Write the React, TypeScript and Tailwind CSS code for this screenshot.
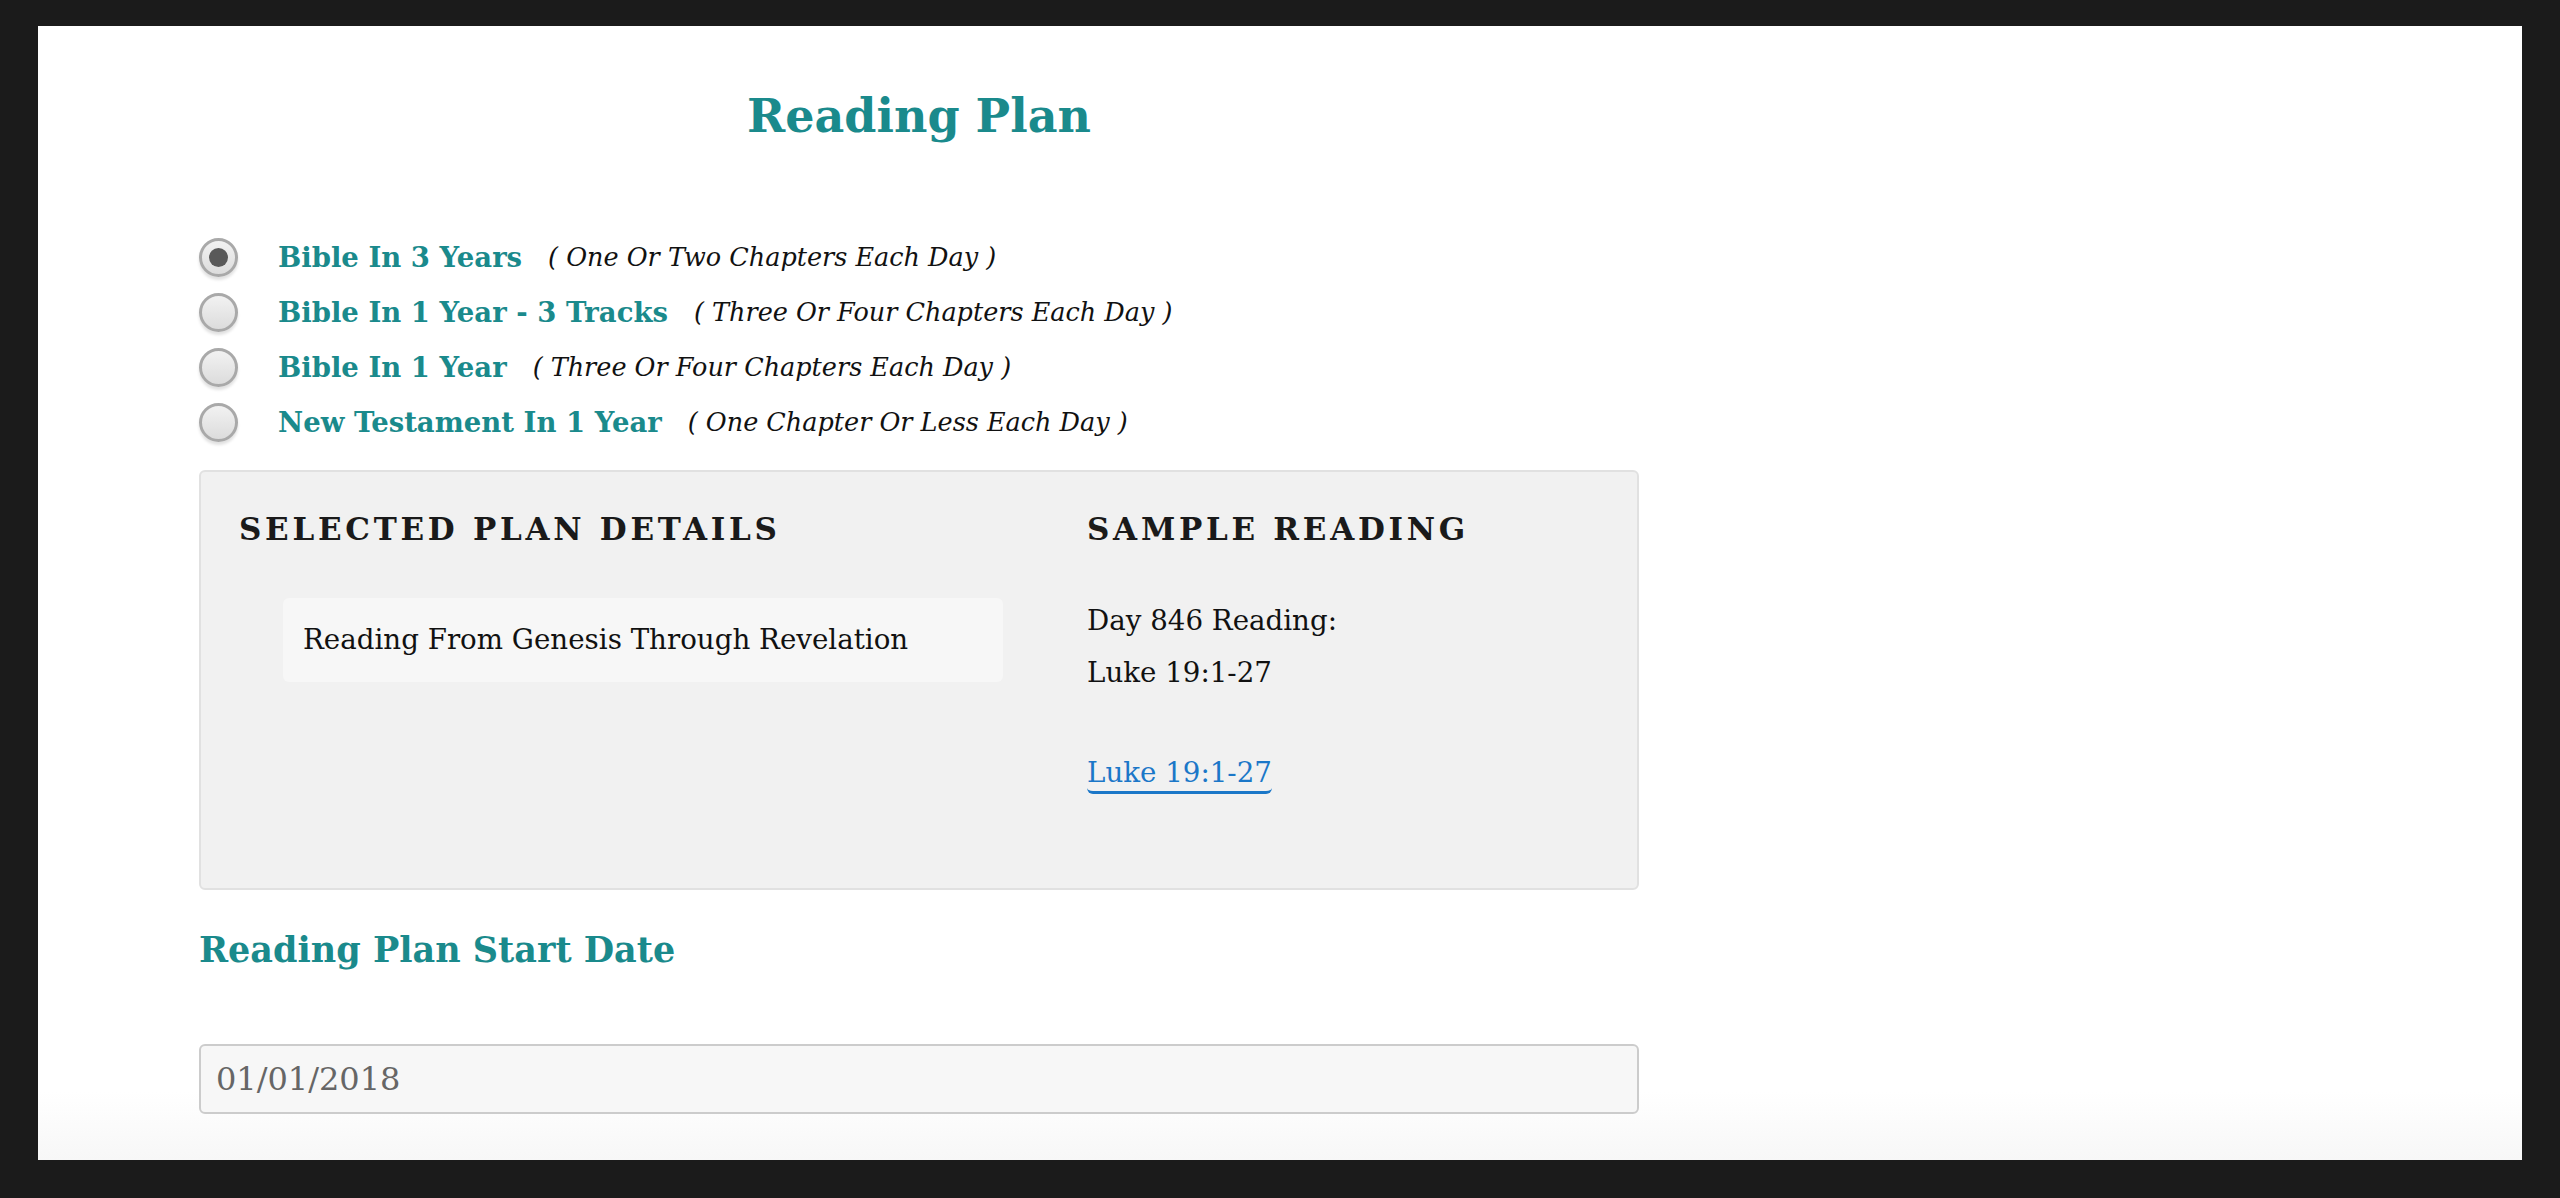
import React from "react";

type Plan = {
    id: string;
    name: string;
    note: string;
};

const plans: Plan[] = [
    { id: "3y", name: "Bible In 3 Years", note: "( One Or Two Chapters Each Day )" },
    { id: "1y3t", name: "Bible In 1 Year - 3 Tracks", note: "( Three Or Four Chapters Each Day )" },
    { id: "1y", name: "Bible In 1 Year", note: "( Three Or Four Chapters Each Day )" },
    { id: "nt", name: "New Testament In 1 Year", note: "( One Chapter Or Less Each Day )" },
];

const serif = "font-['DejaVu_Serif','Liberation_Serif',serif]";

const Radio: React.FC<{ checked: boolean }> = ({ checked }) => {
    return (
        <div className="w-[39px] h-[39px] rounded-full border-[3px] border-[#a9a9a9] bg-gradient-to-b from-[#f2f2f2] to-[#dcdcdc] shadow-[0_3px_3px_rgba(0,0,0,0.12)] flex justify-center items-center">
            {checked && <span className="w-[19px] h-[19px] rounded-full bg-[#595959]"></span>}
        </div>
    );
};

const App: React.FC = () => {
    const selected = "3y";
    return (
        <div className={`w-full h-[1198px] bg-[#1b1b1b] pt-[26px] px-[38px] pb-[38px] flex ${serif}`}>
            <div className="flex-1 bg-gradient-to-b from-white from-[94%] to-[#f7f7f7]">
                <div className="ml-[161px] w-[1440px] flex flex-col">
                    <h1 className="mt-[50px] text-center text-[46px] leading-[80px] font-bold text-[#1a8a8c]">
                        Reading Plan
                    </h1>

                    <div className="mt-[74px] flex flex-col">
                        {plans.map((p) => (
                            <label key={p.id} className="h-[55px] flex items-center">
                                <Radio checked={p.id === selected}></Radio>
                                <span className="ml-[40px] text-[27.5px] font-bold text-[#1a8a8c]">{p.name}</span>
                                <span className="ml-[26px] text-[25.5px] italic text-[#111]">{p.note}</span>
                            </label>
                        ))}
                    </div>

                    <div className="mt-[20px] h-[420px] rounded-md border-2 border-[#e1e1e1] bg-[#f1f1f1] pt-[35px] pl-[38px] flex">
                        <div className="w-[848px] flex flex-col">
                            <h3 className="text-[31px] leading-[44px] font-bold tracking-[0.12em] text-[#1a1a1a]">
                                SELECTED PLAN DETAILS
                            </h3>
                            <div className="mt-[47px] ml-[44px] w-[720px] h-[84px] rounded-md bg-[#f7f7f7] px-[20px] flex items-center text-[27.7px] text-[#111]">
                                Reading From Genesis Through Revelation
                            </div>
                        </div>
                        <div className="flex flex-col">
                            <h3 className="text-[31px] leading-[44px] font-bold tracking-[0.12em] text-[#1a1a1a]">
                                SAMPLE READING
                            </h3>
                            <div className="mt-[44px] text-[27.7px] leading-[52px] text-[#111]">
                                <div>Day 846 Reading:</div>
                                <div>Luke 19:1-27</div>
                            </div>
                            <a
                                href="#"
                                className="mt-[56px] self-start text-[27.7px] leading-[36px] text-[#1b77c8] border-b-[3px] border-[#1b77c8] rounded-b-md"
                            >
                                Luke 19:1-27
                            </a>
                        </div>
                    </div>

                    <h2 className="mt-[32px] text-[35px] leading-[56px] font-bold text-[#1a8a8c]">
                        Reading Plan Start Date
                    </h2>

                    <div className="mt-[66px] h-[70px] rounded-md border-2 border-[#cccccc] bg-[#f7f7f7] px-[15px] flex items-center text-[32px] text-[#666]">
                        01/01/2018
                    </div>
                </div>
            </div>
        </div>
    );
};

export default App;
